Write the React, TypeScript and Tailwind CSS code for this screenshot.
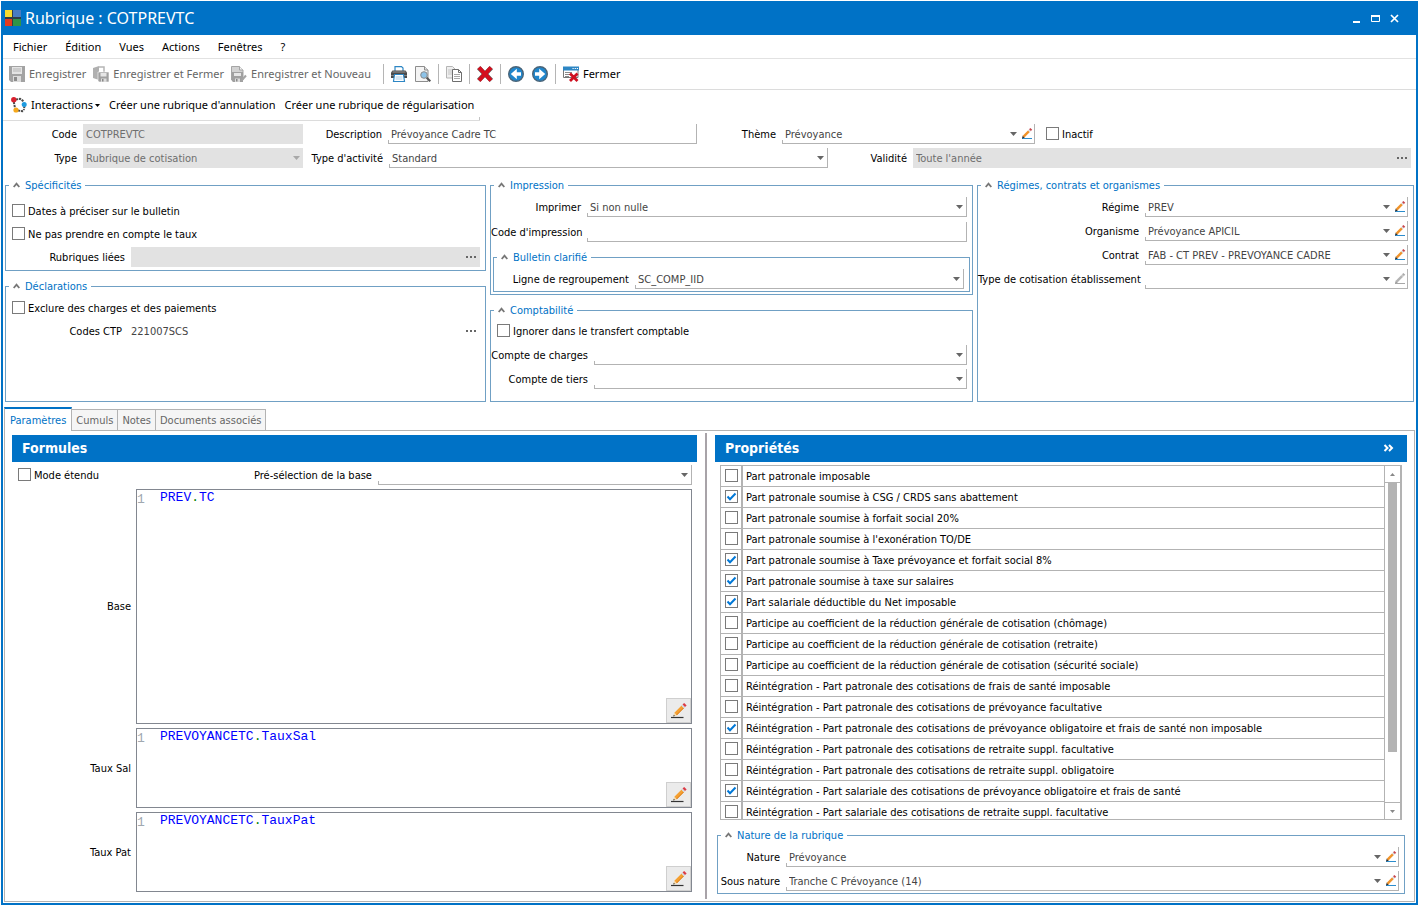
import { useId, useState, type ReactNode } from 'react';

type EditState = 'none' | 'on' | 'off';

function Pencil({ disabled = false }: { disabled?: boolean }) {
  return (
    <svg className="block size-3 shrink-0" viewBox="0 0 12 12" aria-hidden="true">
      <path d="M1 10.5h10" stroke={disabled ? '#a8a8a8' : '#2b8ccc'} strokeWidth="1" />
      <path d="M1 10.400 1.800 7.600 3.800 9.600z" fill={disabled ? '#999' : '#222'} />
      <path d="M2.600 8.600 8 3.200" stroke={disabled ? '#b4b4b4' : '#f0932b'} strokeWidth="2.400" />
      <path d="M7.800 3.400 9 2.200" stroke={disabled ? '#c8c8c8' : '#d9d9d9'} strokeWidth="2.400" />
      <path d="M9 2.200 10.300 0.900" stroke={disabled ? '#aaa' : '#c8434a'} strokeWidth="2.600" />
    </svg>
  );
}

function LargePencil() {
  return (
    <svg className="block size-4" viewBox="0 0 16 16" aria-hidden="true">
      <path d="M0 14.500h12.500" stroke="#333" strokeWidth="1.200" />
      <path d="M2.300 13.400 3.300 9.800 5.900 12.400z" fill="#f5d9a8" />
      <path d="M2.300 13.400 2.800 11.800l1.100 1.100z" fill="#222" />
      <path d="M4.600 11 11.800 3.800" stroke="#f5a030" strokeWidth="3.400" />
      <path d="M5.600 12 12.800 4.800" stroke="#d97a1a" strokeWidth="1" />
      <path d="M11.600 4 13 2.600" stroke="#d4dbe2" strokeWidth="3.500" />
      <path d="M12.800 2.800 14.400 1.200" stroke="#dc3b45" strokeWidth="3.500" />
    </svg>
  );
}

function Arrow({ muted = false }: { muted?: boolean }) {
  return (
    <svg className="block h-1 w-[7px]" viewBox="0 0 7 4" aria-hidden="true">
      <path d="M0 0h7L3.500 4z" fill={muted ? '#a8a8a8' : '#666'} />
    </svg>
  );
}

function Dots() {
  return (
    <svg className="block h-0.5 w-[10px]" viewBox="0 0 10 2" aria-hidden="true">
      <path d="M0 0h2v2H0zM4 0h2v2H4zM8 0h2v2H8z" fill="#666" />
    </svg>
  );
}

function Frame({ grey = false, bare = false, children }: { grey?: boolean; bare?: boolean; children: ReactNode }) {
  if (grey) return <div className="relative flex h-5 min-w-0 flex-1 items-center bg-[#e2e2e2] text-[#6e6e6e]">{children}</div>;
  if (bare) return <div className="relative flex h-5 min-w-0 flex-1 items-center text-[#444]">{children}</div>;
  return (
    <div className="relative flex h-5 min-w-0 flex-1 items-center border-r border-b border-[#b3b3b3] pt-px text-[#444] before:absolute before:bottom-0 before:left-0 before:h-[3px] before:w-px before:bg-[#b3b3b3]">
      {children}
    </div>
  );
}

function TextField({ id, value = '', grey }: { id: string; value?: string; grey?: boolean }) {
  return (
    <Frame grey={grey}>
      <input id={id} type="text" defaultValue={value} disabled={grey} className="h-full w-full min-w-0 bg-transparent px-[3px] outline-none" />
    </Frame>
  );
}

function LookupField({ id, value = '', grey }: { id: string; value?: string; grey?: boolean }) {
  return (
    <Frame grey={grey} bare={!grey}>
      <input id={id} type="text" defaultValue={value} readOnly className="h-full w-full min-w-0 bg-transparent px-[3px] outline-none" />
      <button type="button" aria-label="Parcourir" className="flex h-full w-[18px] shrink-0 items-center justify-center">
        <Dots />
      </button>
    </Frame>
  );
}

function SelectField({ id, value = '', grey, edit = 'none' }: { id: string; value?: string; grey?: boolean; edit?: EditState }) {
  return (
    <Frame grey={grey}>
      <div className="relative h-full min-w-0 flex-1">
        <select id={id} defaultValue={value} disabled={grey} className="h-full w-full appearance-none bg-transparent pt-px pr-4 pl-[3px] opacity-100 outline-none">
          <option value={value}>{value}</option>
        </select>
        <span className={`pointer-events-none absolute inset-y-0 flex items-center ${edit === 'none' ? 'right-[3px]' : 'right-0'}`}>
          <Arrow muted={grey} />
        </span>
      </div>
      {edit !== 'none' && (
        <button type="button" aria-label="Modifier" disabled={edit === 'off'} className="mr-px flex h-full w-4 shrink-0 items-center justify-end">
          <Pencil disabled={edit === 'off'} />
        </button>
      )}
    </Frame>
  );
}

function Check({ id, checked = false, name }: { id?: string; checked?: boolean; name?: string }) {
  return (
    <span className="grid h-[14px] w-[13px] shrink-0 content-start">
      <input id={id} type="checkbox" defaultChecked={checked} aria-label={name} className="peer col-start-1 row-start-1 size-[13px] appearance-none border border-[#7a7a7a] bg-white" />
      <svg className="pointer-events-none col-start-1 row-start-1 size-[13px] opacity-0 peer-checked:opacity-100" viewBox="0 0 13 13" aria-hidden="true">
        <path d="M2.500 6.500 5 9.200 10.500 3.500" fill="none" stroke="#0078d7" strokeWidth="2" />
      </svg>
    </span>
  );
}

function CheckRow({ text }: { text: string }) {
  const id = useId();
  return (
    <div className="flex h-5 items-center gap-[3px]">
      <Check id={id} />
      <label htmlFor={id} className="whitespace-nowrap">{text}</label>
    </div>
  );
}

function Group({ title, className = '', children }: { title: string; className?: string; children: ReactNode }) {
  return (
    <fieldset className={`min-w-0 border border-[#70a0c4] ${className}`}>
      <legend className="ml-[3px] flex h-4 items-center gap-[5px] px-1 text-[#0072c6]">
        <button type="button" aria-label={`Réduire ${title}`}>
          <svg className="block h-[6px] w-[7px]" viewBox="0 0 7 6" aria-hidden="true">
            <path d="M0.700 5 3.500 1.600 6.300 5" fill="none" stroke="#777" strokeWidth="1.800" />
          </svg>
        </button>
        {title}
      </legend>
      {children}
    </fieldset>
  );
}

function Row({ label, labelWidth, children }: { label: string; labelWidth: string; children: (id: string) => ReactNode }) {
  const id = useId();
  return (
    <div className="flex h-5 items-center gap-1.5">
      <label htmlFor={id} className={`shrink-0 text-right whitespace-nowrap ${labelWidth}`}>{label}</label>
      {children(id)}
    </div>
  );
}

function Editor({ label, value, className }: { label: string; value: string; className: string }) {
  const id = useId();
  const [code, setCode] = useState(value);
  return (
    <div className={`flex items-stretch gap-[5px] ${className}`}>
      <label htmlFor={id} className="flex w-[119px] shrink-0 items-center justify-end">{label}</label>
      <div className="relative flex min-w-0 flex-1 border border-[#828790] font-['Liberation_Mono',monospace] text-[13px] leading-4">
        <span className="w-[23px] shrink-0 pt-0.5 text-[#a0a8b0]">1</span>
        <div className="grid min-w-0 flex-1">
          <pre aria-hidden="true" className="col-start-1 row-start-1 font-[inherit] text-[#0000ff]">
            {code.split('.').map((part, i) => (
              <span key={i}>{i > 0 && <span className="text-[#008000]">.</span>}{part}</span>
            ))}
          </pre>
          <textarea id={id} value={code} onChange={(e) => setCode(e.target.value)} spellCheck={false} className="col-start-1 row-start-1 h-full w-full resize-none bg-transparent text-transparent caret-black outline-none" />
        </div>
        <button type="button" aria-label={`Modifier ${label}`} className="absolute right-0 bottom-0 flex size-[25px] items-center justify-center border border-[#cfcfcf] bg-[#ebebeb]">
          <LargePencil />
        </button>
      </div>
    </div>
  );
}

const properties: [string, boolean][] = [
  ['Part patronale imposable', false],
  ['Part patronale soumise à CSG / CRDS sans abattement', true],
  ['Part patronale soumise à forfait social 20%', false],
  ["Part patronale soumise à l'exonération TO/DE", false],
  ['Part patronale soumise à Taxe prévoyance et forfait social 8%', true],
  ['Part patronale soumise à taxe sur salaires', true],
  ['Part salariale déductible du Net imposable', true],
  ['Participe au coefficient de la réduction générale de cotisation (chômage)', false],
  ['Participe au coefficient de la réduction générale de cotisation (retraite)', false],
  ['Participe au coefficient de la réduction générale de cotisation (sécurité sociale)', false],
  ['Réintégration - Part patronale des cotisations de frais de santé imposable', false],
  ['Réintégration - Part patronale des cotisations de prévoyance facultative', false],
  ['Réintégration - Part patronale des cotisations de prévoyance obligatoire et frais de santé non imposable', true],
  ['Réintégration - Part patronale des cotisations de retraite suppl. facultative', false],
  ['Réintégration - Part patronale des cotisations de retraite suppl. obligatoire', false],
  ['Réintégration - Part salariale des cotisations de prévoyance obligatoire et frais de santé', true],
  ['Réintégration - Part salariale des cotisations de retraite suppl. facultative', false],
];

function Floppy() {
  return (
    <svg className="block size-4" viewBox="0 0 16 16" aria-hidden="true">
      <path d="M0 0h16v16H2l-2-2z" fill="#a3a3a3" />
      <path d="M3 1h10v7H3z" fill="#e4e4e4" />
      <path d="M4 3h8M4 5h8" stroke="#b5b5b5" />
      <path d="M4 10h8v6H4z" fill="#dcdcdc" />
      <path d="M5 11h3v4H5z" fill="#8c8c8c" />
    </svg>
  );
}

function FloppyDoor() {
  return (
    <svg className="block size-4" viewBox="0 0 16 16" aria-hidden="true">
      <path d="M0 2 6 0v14l-6-2z" fill="#b0b0b0" />
      <path d="M6 1h5v5" fill="none" stroke="#b5b5b5" strokeWidth="1.500" />
      <path d="M5 6h11v10H6l-1-1z" fill="#a0a0a0" stroke="#fff" strokeWidth="0.600" />
      <path d="M7.500 7h6v3.500h-6z" fill="#e6e6e6" />
      <path d="M8 12.500h5.500V16H8z" fill="#ddd" />
      <path d="M9 13h1.500v2.500H9z" fill="#888" />
    </svg>
  );
}

function FloppyPage() {
  return (
    <svg className="block size-4" viewBox="0 0 16 16" aria-hidden="true">
      <path d="M0.500 0.500h8l3.500 3.500v10H0.500z" fill="#d2d2d2" stroke="#a5a5a5" />
      <path d="M8.500 0.500V4H12" fill="#f3f3f3" stroke="#a5a5a5" />
      <path d="M1 6h11v10H2l-1-1z" fill="#a0a0a0" />
      <path d="M3 7h7v3H3z" fill="#e6e6e6" />
      <path d="M4 12.500h5V16H4z" fill="#ddd" />
      <path d="M5 13h1.500v2.500H5z" fill="#888" />
      <path d="M10.500 14.500 15 9.500" stroke="#a5a5a5" strokeWidth="2" />
    </svg>
  );
}

function Printer() {
  return (
    <svg className="block size-4" viewBox="0 0 16 16" aria-hidden="true">
      <path d="M4 5V0.600h6.500L12 2v3" fill="#fff" stroke="#2d86c4" strokeWidth="1.200" />
      <path d="M1.500 4.500h13L16 6.500V12H0V6.500z" fill="#4a4a4a" />
      <path d="M1.500 6h13" stroke="#9a9a9a" />
      <path d="M0 9.500h16" stroke="#858585" />
      <path d="M3.500 8.500h9l1 7h-11z" fill="#fff" stroke="#2d86c4" strokeWidth="1.200" />
      <path d="M4.500 11h7M4.500 13h7" stroke="#a9cde6" />
    </svg>
  );
}

function Preview() {
  return (
    <svg className="block size-4" viewBox="0 0 16 16" aria-hidden="true">
      <path d="M0.500 0.500h9l3.500 3.500v11.500H0.500z" fill="#f4f4f4" stroke="#8d8d8d" />
      <path d="M9.500 0.500V4H13" fill="#ddd" stroke="#8d8d8d" />
      <path d="M11.500 11.500 15.300 15.300" stroke="#555" strokeWidth="2" />
      <circle cx="9" cy="9" r="3.300" fill="#8dc3e8" stroke="#8a8a8a" />
    </svg>
  );
}

function Copy() {
  return (
    <svg className="block size-4" viewBox="0 0 16 16" aria-hidden="true">
      <path d="M0.500 0.500h6l2.500 2.500v9H0.500z" fill="#efefef" stroke="#b5b5b5" />
      <path d="M2 4h5M2 6h5M2 8h5" stroke="#c4c4c4" />
      <path d="M6.500 3.500h6l3 3v9h-9z" fill="#fff" stroke="#6e6e6e" />
      <path d="M12.500 3.500v3h3" fill="none" stroke="#6e6e6e" />
      <path d="M8 8.500h6M8 10.500h6M8 12.500h6" stroke="#a8a8a8" />
    </svg>
  );
}

function Cross() {
  return (
    <svg className="block size-4" viewBox="0 0 16 16" aria-hidden="true">
      <path d="M3.200 0 8 4.700 12.800 0 16 3.200 11.400 8 16 12.800 12.800 16 8 11.300 3.200 16 0 12.800 4.600 8 0 3.200z" fill="#666" />
      <path d="M3.600 0.300 8 5.200 12.400 0.300 15.500 2.800 10.800 8 15.500 13.200 12.400 15.700 8 10.800 3.600 15.700 0.500 13.200 5.200 8 0.500 2.800z" fill="#d40f1e" />
    </svg>
  );
}

function Circle({ forward = false }: { forward?: boolean }) {
  return (
    <svg className="block size-4" viewBox="0 0 16 16" aria-hidden="true">
      <circle cx="8" cy="8" r="7.300" fill="#1f86cc" stroke="#4a6478" strokeWidth="1.400" />
      <path d={forward ? 'M3 6.300H7.200V2.800L13.200 8 7.200 13.200V9.700H3z' : 'M13 6.300H8.800V2.800L2.800 8 8.800 13.200V9.700H13z'} fill="#fff" />
    </svg>
  );
}

function CloseWindow() {
  return (
    <svg className="block size-4" viewBox="0 0 16 16" aria-hidden="true">
      <path d="M0.500 1.500h14.500v10H0.500z" fill="#fff" stroke="#777" />
      <path d="M0 0.500h16v4H0z" fill="#2d86c4" />
      <path d="M9.500 2.500h1.200M11.700 2.500h1.200M13.800 2.500h1.200" stroke="#fff" />
      <path d="M2 6.500h7M2 8.500h6M2 10.500h4" stroke="#8a8a8a" />
      <path d="M7 7.500 14.500 15M14.500 7.500 7 15" stroke="#cf1020" strokeWidth="2.800" />
    </svg>
  );
}

function Interactions() {
  return (
    <svg className="block size-4" viewBox="0 0 16 16" aria-hidden="true">
      <path d="M5 2.500 9 1.800l4 2.700M13.500 9 12.800 13M2.800 5 4 11M7 13.500l6 1" fill="none" stroke="#4a4a4a" strokeWidth="2" strokeDasharray="2.200 0.800" />
      <circle cx="2.800" cy="2.800" r="2.700" fill="#d9202e" />
      <circle cx="13.200" cy="7.500" r="2.500" fill="#1e9be0" />
      <circle cx="5" cy="13" r="2.600" fill="#f5a81c" />
    </svg>
  );
}

function Tool({ icon, text, disabled }: { icon: ReactNode; text: string; disabled?: boolean }) {
  return (
    <button type="button" disabled={disabled} className="flex items-center gap-1 whitespace-nowrap disabled:text-[#666]">
      {icon}
      {text}
    </button>
  );
}

function IconTool({ icon, name }: { icon: ReactNode; name: string }) {
  return <button type="button" aria-label={name}>{icon}</button>;
}

function Sep() {
  return <span className="-mx-px h-5 w-px bg-[#b5b5b5]" />;
}

function SectionTitle({ children }: { children: ReactNode }) {
  return (
    <div className="flex h-[27px] shrink-0 items-center justify-between bg-[#0072c6] pr-3 pl-2.5 text-white">{children}</div>
  );
}

export default function App() {
  const codeId = useId();
  const descId = useId();
  const themeId = useId();
  const typeId = useId();
  const actId = useId();
  const valId = useId();
  const preId = useId();

  return (
    <div className="flex min-h-screen flex-col bg-white p-px font-['DejaVu_Sans_Condensed','DejaVu_Sans',sans-serif] text-[11px] leading-[17px] text-black">
      <div className="flex flex-1 flex-col border-x-2 border-b-2 border-[#0072c6]">
        <header className="flex h-[34px] items-center gap-1 bg-[#0072c6] pr-[17px] pl-0.5 text-white">
          <svg className="block size-4" viewBox="0 0 16 16" aria-hidden="true">
            <path d="M0 0h16v16H0z" fill="#2f3e46" />
            <path d="M0 0h7v7H0z" fill="#f7dc2e" />
            <path d="M8 0h8v7H8z" fill="#4a7cc0" />
            <path d="M0 9h7v7H0z" fill="#e23a1e" />
            <path d="M8 9h8v7H8z" fill="#2f9448" />
          </svg>
          <h1 className="flex-1 font-['Noto_Sans',sans-serif] text-[16px] leading-6">Rubrique : COTPREVTC</h1>
          <div className="flex items-center gap-2.5">
            <button type="button" aria-label="Réduire">
              <svg className="block h-[9px] w-2" viewBox="0 0 8 9"><path d="M0 8h7" stroke="#fff" strokeWidth="2" /></svg>
            </button>
            <button type="button" aria-label="Agrandir">
              <svg className="block h-[9px] w-[9px]" viewBox="0 0 9 9"><path d="M0.500 1.500h8v6h-8z" fill="none" stroke="#fff" /><path d="M0 2h9" stroke="#fff" strokeWidth="2" /></svg>
            </button>
            <button type="button" aria-label="Fermer la fenêtre">
              <svg className="block h-[9px] w-[9px]" viewBox="0 0 9 9"><path d="M1 1 8 8M8 1 1 8" stroke="#fff" strokeWidth="1.700" /></svg>
            </button>
          </div>
        </header>

        <nav className="flex h-6 items-center gap-[18px] border-b border-[#e2e2e2] pl-2.5 font-['Noto_Sans',sans-serif]">
          {['Fichier', 'Édition', 'Vues', 'Actions', 'Fenêtres', '?'].map((m) => (
            <button key={m} type="button">{m}</button>
          ))}
        </nav>

        <div className="flex h-[31px] items-center gap-2 border-b border-[#dcdcdc] pl-1.5 font-['Noto_Sans',sans-serif] leading-4">
          <div className="mr-[5px] flex items-center gap-[7px]">
            <Tool icon={<Floppy />} text="Enregistrer" disabled />
            <Tool icon={<FloppyDoor />} text="Enregistrer et Fermer" disabled />
            <Tool icon={<FloppyPage />} text="Enregistrer et Nouveau" disabled />
          </div>
          <Sep />
          <IconTool icon={<Printer />} name="Imprimer la rubrique" />
          <IconTool icon={<Preview />} name="Aperçu" />
          <Sep />
          <IconTool icon={<Copy />} name="Dupliquer" />
          <Sep />
          <IconTool icon={<Cross />} name="Supprimer" />
          <Sep />
          <IconTool icon={<Circle />} name="Précédent" />
          <IconTool icon={<Circle forward />} name="Suivant" />
          <Sep />
          <Tool icon={<CloseWindow />} text="Fermer" />
        </div>

        <div className="relative flex h-[31px] items-center gap-[9px] self-start border-b border-[#dcdcdc] pr-1.5 pl-2 font-['Noto_Sans',sans-serif] leading-4 after:absolute after:right-0 after:bottom-0 after:h-[3px] after:w-px after:bg-[#c4c4c4]">
          <button type="button" className="flex items-center gap-1 whitespace-nowrap">
            <Interactions />
            Interactions
            <svg className="-ml-0.5 block h-[3px] w-[5px]" viewBox="0 0 5 3" aria-hidden="true"><path d="M0 0h5L2.500 3z" /></svg>
          </button>
          <button type="button" className="whitespace-nowrap">Créer une rubrique d'annulation</button>
          <button type="button" className="whitespace-nowrap">Créer une rubrique de régularisation</button>
        </div>

        <section className="flex flex-col gap-1 pt-[3px] pr-[5px]">
          <div className="grid grid-cols-[74px_220fr_73px_309fr_73px_253fr_370fr] items-center gap-x-1.5">
            <label htmlFor={codeId} className="text-right">Code</label>
            <TextField id={codeId} value="COTPREVTC" grey />
            <label htmlFor={descId} className="text-right">Description</label>
            <TextField id={descId} value="Prévoyance Cadre TC" />
            <label htmlFor={themeId} className="text-right">Thème</label>
            <SelectField id={themeId} value="Prévoyance" edit="on" />
            <div className="pl-[5px]"><CheckRow text="Inactif" /></div>
          </div>
          <div className="grid grid-cols-[74px_220fr_74px_439fr_73px_498fr] items-center gap-x-1.5">
            <label htmlFor={typeId} className="text-right">Type</label>
            <SelectField id={typeId} value="Rubrique de cotisation" grey />
            <label htmlFor={actId} className="text-right whitespace-nowrap">Type d'activité</label>
            <SelectField id={actId} value="Standard" />
            <label htmlFor={valId} className="text-right">Validité</label>
            <LookupField id={valId} value="Toute l'année" grey />
          </div>
        </section>

        <section className="mt-[9px] grid grid-cols-[481fr_483fr_437fr] gap-1 px-0.5">
          <div className="flex min-w-0 flex-col gap-[7px]">
            <Group title="Spécificités" className="pb-[3px]">
              <div className="flex flex-col gap-[3px] pt-2 pr-[5px] pl-1.5">
                <CheckRow text="Dates à préciser sur le bulletin" />
                <CheckRow text="Ne pas prendre en compte le taux" />
                <Row label="Rubriques liées" labelWidth="w-[113px]">{(id) => <LookupField id={id} grey />}</Row>
              </div>
            </Group>
            <Group title="Déclarations" className="flex-1">
              <div className="flex flex-col gap-[3px] pt-1 pr-[5px] pl-1.5">
                <CheckRow text="Exclure des charges et des paiements" />
                <Row label="Codes CTP" labelWidth="w-[110px]">{(id) => <LookupField id={id} value="221007SCS" />}</Row>
              </div>
            </Group>
          </div>

          <div className="flex min-w-0 flex-col gap-[7px]">
            <Group title="Impression" className="pb-0.5">
              <div className="flex flex-col gap-[5px] pt-1 pr-[5px]">
                <Row label="Imprimer" labelWidth="w-[90px]">{(id) => <SelectField id={id} value="Si non nulle" />}</Row>
                <Row label="Code d'impression" labelWidth="w-[90px]">{(id) => <TextField id={id} />}</Row>
              </div>
              <div className="px-0.5 pt-[7px]">
                <Group title="Bulletin clarifié" className="pb-0.5">
                  <div className="pt-1 pr-[5px]">
                    <Row label="Ligne de regroupement" labelWidth="w-[135px]">{(id) => <SelectField id={id} value="SC_COMP_IID" />}</Row>
                  </div>
                </Group>
              </div>
            </Group>
            <Group title="Comptabilité" className="flex-1 pb-3">
              <div className="flex flex-col gap-1 pt-[3px] pr-[5px]">
                <div className="pl-1.5"><CheckRow text="Ignorer dans le transfert comptable" /></div>
                <Row label="Compte de charges" labelWidth="w-[97px]">{(id) => <SelectField id={id} />}</Row>
                <Row label="Compte de tiers" labelWidth="w-[97px]">{(id) => <SelectField id={id} />}</Row>
              </div>
            </Group>
          </div>

          <Group title="Régimes, contrats et organismes">
            <div className="flex flex-col gap-1 pt-1 pr-[5px]">
              <Row label="Régime" labelWidth="w-[161px]">{(id) => <SelectField id={id} value="PREV" edit="on" />}</Row>
              <Row label="Organisme" labelWidth="w-[161px]">{(id) => <SelectField id={id} value="Prévoyance APICIL" edit="on" />}</Row>
              <Row label="Contrat" labelWidth="w-[161px]">{(id) => <SelectField id={id} value="FAB - CT PREV - PREVOYANCE CADRE" edit="on" />}</Row>
              <Row label="Type de cotisation établissement" labelWidth="w-[161px]">{(id) => <SelectField id={id} edit="off" />}</Row>
            </div>
          </Group>
        </section>

        <div role="tablist" className="mt-[5px] flex h-6 items-end px-px text-[#666]">
          <button type="button" role="tab" aria-selected="true" className="relative -mb-px flex h-6 items-center self-start border-t-2 border-r border-l border-t-[#0072c6] border-r-[#b3b3b3] border-l-[#b3b3b3] bg-white px-[5px] text-[#0072c6]">Paramètres</button>
          {['Cumuls', 'Notes', 'Documents associés'].map((t) => (
            <button key={t} type="button" role="tab" aria-selected="false" className="flex h-[22px] items-center border-t border-r border-b border-[#b3b3b3] bg-[#f5f5f5] px-1 whitespace-nowrap">{t}</button>
          ))}
          <span className="flex-1 border-b border-[#b3b3b3]" />
        </div>

        <main className="mx-px mb-px flex flex-1 border-x border-b border-[#b3b3b3] pt-0.5 pb-0.5">
          <section className="flex min-w-0 flex-[685] flex-col pt-0.5 pr-2 pl-[7px]">
            <SectionTitle><h2 className="text-[14px] font-bold">Formules</h2></SectionTitle>
            <div className="mt-[3px] flex h-5 items-center justify-between gap-1.5 pr-[5px] pl-1.5">
              <div className="w-[230px] shrink-0"><CheckRow text="Mode étendu" /></div>
              <label htmlFor={preId} className="whitespace-nowrap">Pré-sélection de la base</label>
              <SelectField id={preId} />
            </div>
            <div className="mt-1 mb-[7px] flex flex-1 flex-col gap-1 pr-[5px]">
              <Editor label="Base" value="PREV.TC" className="min-h-[120px] flex-1" />
              <Editor label="Taux Sal" value="PREVOYANCETC.TauxSal" className="h-20" />
              <Editor label="Taux Pat" value="PREVOYANCETC.TauxPat" className="h-20" />
            </div>
          </section>
          <div className="w-0.5 shrink-0 bg-[#a8a3a8]" />
          <section className="flex min-w-0 flex-[692] flex-col pt-0.5 pr-[7px] pl-2">
            <SectionTitle>
              <h2 className="text-[14px] font-bold">Propriétés</h2>
              <button type="button" aria-label="Replier">
                <svg className="block h-2.5 w-3" viewBox="0 0 12 10" aria-hidden="true"><path d="M1.500 1 4.500 4 1.500 7M6 1l3 3L6 7" fill="none" stroke="#fff" strokeWidth="2" /></svg>
              </button>
            </SectionTitle>
            <div className="mt-[3px] mr-[5px] ml-[5px] flex min-h-[355px] flex-1 basis-0 border border-r-2 border-[#b3b3b3]">
              <div className="h-0 min-h-full min-w-0 flex-1 overflow-y-auto [scrollbar-width:none]">
                <table className="w-full border-separate border-spacing-0">
                  <tbody>
                    {properties.map(([text, on]) => (
                      <tr key={text} className="h-[21px]">
                        <td className="w-[22px] border-r-2 border-b border-[#b3b3b3] p-0 pl-1"><Check checked={on} name={text} /></td>
                        <td className="border-b border-[#b3b3b3] p-0 pl-[3px] whitespace-nowrap">{text}</td>
                      </tr>
                    ))}
                  </tbody>
                </table>
              </div>
              <div className="flex w-4 shrink-0 flex-col border-l border-[#b3b3b3]">
                <button type="button" aria-label="Monter" className="flex h-[17px] w-full shrink-0 items-center justify-center border-b border-[#b3b3b3]">
                  <svg className="block h-[3px] w-[5px]" viewBox="0 0 5 3" aria-hidden="true"><path d="M0 3h5L2.500 0z" fill="#888" /></svg>
                </button>
                <div className="flex flex-1 flex-col px-[3px]"><div className="flex-[268] bg-[#b3b3b3]" /><div className="flex-[50]" /></div>
                <button type="button" aria-label="Descendre" className="flex h-[17px] w-full shrink-0 items-center justify-center border-t border-[#b3b3b3]">
                  <svg className="block h-[3px] w-[5px]" viewBox="0 0 5 3" aria-hidden="true"><path d="M0 0h5L2.500 3z" fill="#888" /></svg>
                </button>
              </div>
            </div>
            <div className="mt-[7px] mr-0.5 mb-[5px] ml-0.5">
              <Group title="Nature de la rubrique" className="pb-0.5">
                <div className="flex flex-col gap-1 pt-1 pr-[5px]">
                  <Row label="Nature" labelWidth="w-[62px]">{(id) => <SelectField id={id} value="Prévoyance" edit="on" />}</Row>
                  <Row label="Sous nature" labelWidth="w-[62px]">{(id) => <SelectField id={id} value="Tranche C Prévoyance (14)" edit="on" />}</Row>
                </div>
              </Group>
            </div>
          </section>
        </main>
      </div>
    </div>
  );
}
